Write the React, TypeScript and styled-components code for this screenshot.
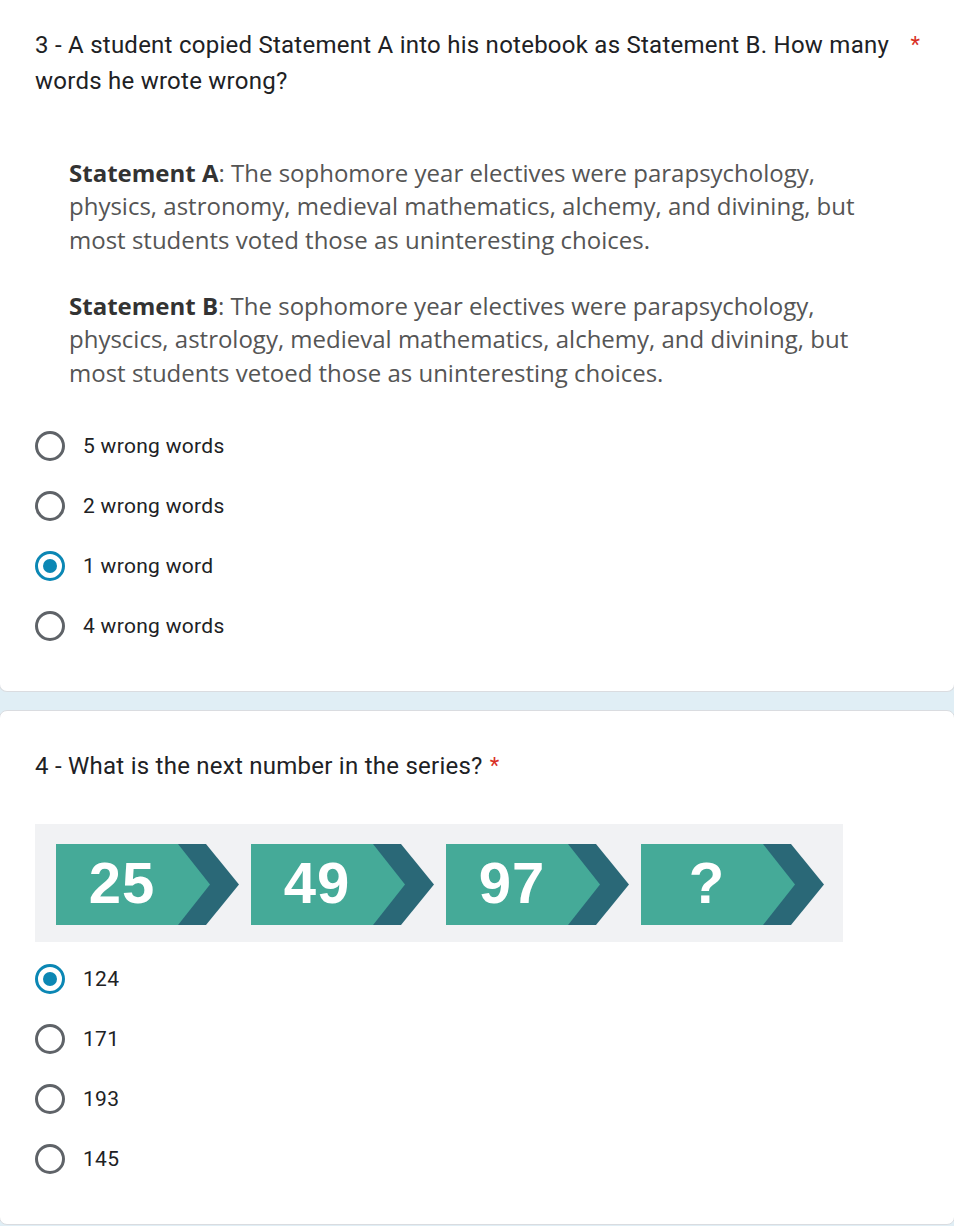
import styled, { createGlobalStyle, css } from "styled-components";

const GlobalStyle = createGlobalStyle`
  html, body {
    margin: 0;
    padding: 0;
    background: #e0eef5;
  }
  body {
    font-family: Roboto, "Liberation Sans", sans-serif;
    color: #202124;
  }
`;

const Page = styled.div`
  width: 954px;
  overflow: hidden;
  display: flex;
  flex-direction: column;
  gap: 18px;
`;

const Card = styled.section<{ $cut?: boolean }>`
  margin: 0 -1px;
  background: #fff;
  border: 1px solid #dadce0;
  border-radius: 8px;
  padding: 37px 34px 35px 35px;
  ${(p) =>
    p.$cut &&
    css`
      border-top: none;
      border-radius: 0 0 8px 8px;
      padding-top: 27px;
    `}
`;

const TitleRow = styled.div`
  display: flex;
  align-items: flex-start;
`;

const Title = styled.div`
  font-family: Roboto, "Liberation Sans", sans-serif;
  font-size: 24px;
  line-height: 36px;
  letter-spacing: 0.25px;
  color: #202124;
`;

const Required = styled.span`
  flex: none;
  color: #d93025;
  font-size: 22px;
  line-height: 36px;
  padding-left: 7px;
`;

const Statement = styled.div`
  margin: 57px 0 0 34px;
  font-family: "Open Sans", "Liberation Sans", sans-serif;
  font-size: 24px;
  line-height: 33.3px;
  color: #555;

  b {
    color: #333;
    font-weight: 700;
  }
`;

const Para = styled.p`
  margin: 0;

  & + & {
    margin-top: 33.3px;
  }
`;

const Options = styled.div<{ $top: number }>`
  margin-top: ${(p) => p.$top}px;
  display: flex;
  flex-direction: column;
`;

const Option = styled.label`
  display: flex;
  align-items: center;
  gap: 18px;
  height: 60px;
  font-size: 21px;
  letter-spacing: 0.3px;
  color: #202124;
`;

const Radio = styled.span<{ $checked?: boolean }>`
  flex: none;
  position: relative;
  width: 30px;
  height: 30px;
  box-sizing: border-box;
  border-radius: 50%;
  border: 3px solid ${(p) => (p.$checked ? "#0b87b4" : "#5f6368")};

  ${(p) =>
    p.$checked &&
    css`
      &::after {
        content: "";
        position: absolute;
        left: 5px;
        top: 5px;
        width: 14px;
        height: 14px;
        border-radius: 50%;
        background: #0b87b4;
      }
    `}
`;

const Series = styled.div`
  margin-top: 40px;
  width: 808px;
  height: 118px;
  box-sizing: border-box;
  padding: 20px 0 0 21px;
  background: #f1f2f4;
  display: flex;
  gap: 12px;
`;

const Arrow = styled.div`
  width: 183px;
  height: 81px;
  background: #2a6877;
  clip-path: polygon(0 0, 150px 0, 183px 40.5px, 150px 81px, 0 81px);
`;

const ArrowBody = styled.div`
  width: 154px;
  height: 81px;
  box-sizing: border-box;
  padding: 0 22px 3px 0;
  background: #45aa98;
  clip-path: polygon(0 0, 122px 0, 154px 40.5px, 122px 81px, 0 81px);
  display: flex;
  align-items: center;
  justify-content: center;
  font-family: "Liberation Sans", Arial, sans-serif;
  font-weight: 700;
  font-size: 58px;
  line-height: 58px;
  letter-spacing: 1px;
  color: #fff;
`;

const q3 = ["5 wrong words", "2 wrong words", "1 wrong word", "4 wrong words"];
const q4 = ["124", "171", "193", "145"];
const series = ["25", "49", "97", "?"];

export default function App() {
  return (
    <Page>
      <GlobalStyle />
      <Card $cut>
        <TitleRow>
          <Title>
            3 - A student copied Statement A into his notebook as Statement B.
            How many words he wrote wrong?
          </Title>
          <Required>*</Required>
        </TitleRow>
        <Statement>
          <Para>
            <b>Statement A</b>: The sophomore year electives were parapsychology,
            <br />
            physics, astronomy, medieval mathematics, alchemy, and divining, but
            <br />
            most students voted those as uninteresting choices.
          </Para>
          <Para>
            <b>Statement B</b>: The sophomore year electives were parapsychology,
            <br />
            physcics, astrology, medieval mathematics, alchemy, and divining, but
            <br />
            most students vetoed those as uninteresting choices.
          </Para>
        </Statement>
        <Options $top={27}>
          {q3.map((o) => (
            <Option key={o}>
              <Radio $checked={o === "1 wrong word"} />
              {o}
            </Option>
          ))}
        </Options>
      </Card>
      <Card>
        <TitleRow>
          <Title>4 - What is the next number in the series?</Title>
          <Required>*</Required>
        </TitleRow>
        <Series>
          {series.map((n) => (
            <Arrow key={n}>
              <ArrowBody>{n}</ArrowBody>
            </Arrow>
          ))}
        </Series>
        <Options $top={7}>
          {q4.map((o) => (
            <Option key={o}>
              <Radio $checked={o === "124"} />
              {o}
            </Option>
          ))}
        </Options>
      </Card>
    </Page>
  );
}
